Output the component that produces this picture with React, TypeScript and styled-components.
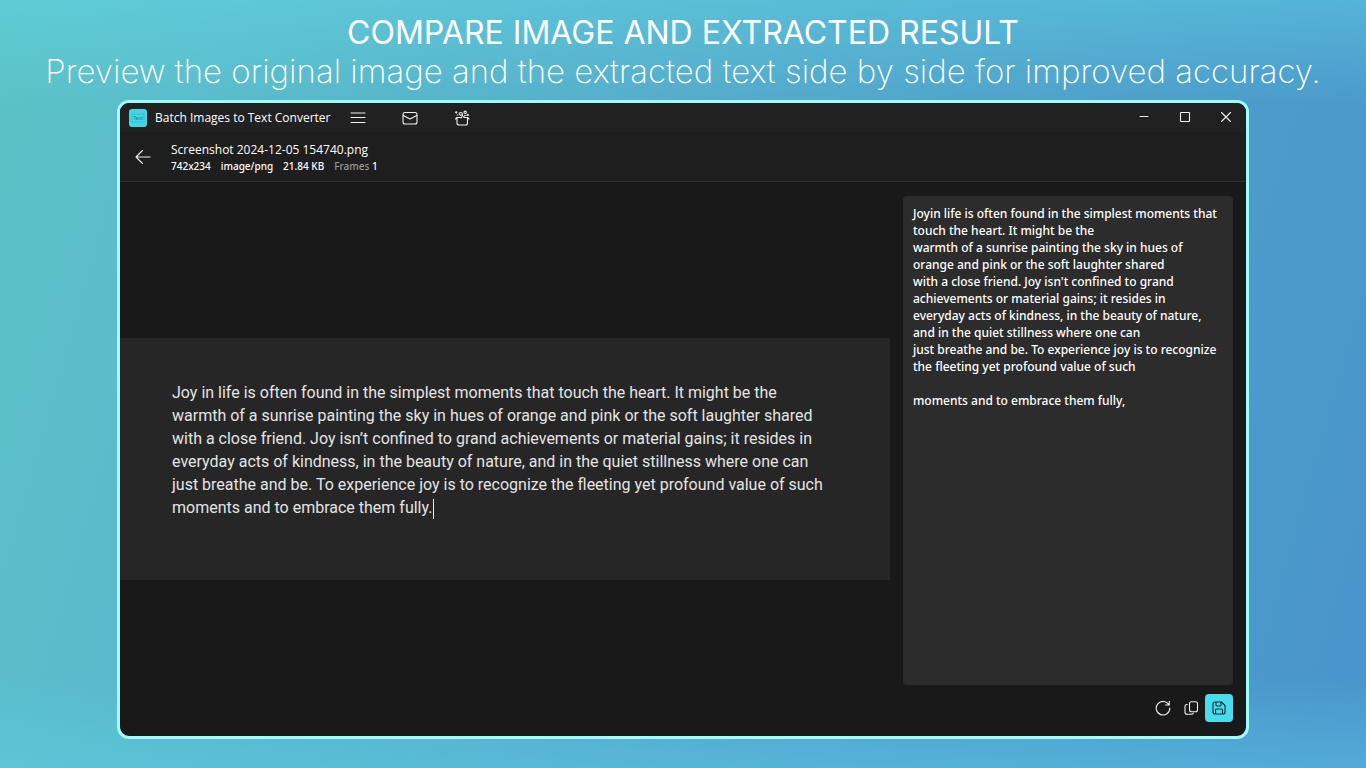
import React from "react";
import styled, { createGlobalStyle } from "styled-components";

const ui = `"Noto Sans", "Open Sans", sans-serif`;

const Global = createGlobalStyle`
  * { box-sizing: border-box; }
  body { margin: 0; font-family: ${ui}; }
`;

const Page = styled.main`
  min-height: 100vh;
  display: flex;
  flex-direction: column;
  padding-bottom: 29px;
  background:
    linear-gradient(180deg, #62dcea66 0%, #62dcea00 14%, #5fe0f000 88%, #5fd8f055 100%),
    linear-gradient(106deg, #5bc2c6 0%, #5bbcca 14%, #54a8ca 50%, #4c9cca 80%, #4a94cc 100%);
`;

const Hero = styled.header`
  color: #fff;
  text-align: center;
  padding-top: 13px;
  white-space: nowrap;
  flex: none;
  height: 100px;
`;

const Title = styled.h1`
  margin: 0;
  font: 400 32px/40px Inter, sans-serif;
`;

const Tagline = styled.p`
  margin: 0;
  font: 200 33px/36px Inter, sans-serif;
`;

const Window = styled.section`
  flex: 1;
  display: flex;
  flex-direction: column;
  width: calc(100% - 234px);
  margin: 0 auto;
  border: 3px solid #9ffcfb;
  border-radius: 12px;
  background: #191919;
  color: #fff;
  overflow: hidden;
`;

const TitleBar = styled.div`
  display: flex;
  align-items: center;
  height: 29px;
  padding-left: 9px;
  background: #212121;
`;

const AppName = styled.span`
  margin-right: 2px;
  font: 400 12px/16px "Open Sans", sans-serif;
`;

const IconButton = styled.button<{ $w?: number; $primary?: boolean }>`
  display: flex;
  align-items: center;
  justify-content: center;
  width: ${(p) => p.$w ?? 28}px;
  height: 28px;
  padding: 0;
  border: 0;
  border-radius: 4px;
  color: ${(p) => (p.$primary ? "#0c3238" : "#f0f0f0")};
  background: ${(p) => (p.$primary ? "#48dcec" : "transparent")};
`;

const FileBar = styled.div`
  display: flex;
  align-items: center;
  gap: 14px;
  height: 50px;
  padding-left: 9px;
  background: #1e1e1e;
  border-bottom: 1px solid #303030;
`;

const FileInfo = styled.div`
  padding-top: 3px;
`;

const FileName = styled.h2`
  margin: 0;
  font: 400 12px/16px "Open Sans", sans-serif;
`;

const Meta = styled.div`
  display: flex;
  gap: 10px;
  font-size: 10px;
  line-height: 16px;
  font-weight: 500;
`;

const Muted = styled.span`
  color: #999;
`;

const Body = styled.div`
  flex: 1;
  display: grid;
  grid-template-columns: minmax(0, 7fr) minmax(0, 3fr);
  column-gap: 13px;
  padding-right: 13px;
`;

const Preview = styled.div`
  display: flex;
  flex-direction: column;
  justify-content: center;
`;

const Picture = styled.article`
  padding: 43px 52px 61px;
  background: #262626;
  color: #e4e4e4;
  font: 400 16px/23px Roboto, sans-serif;
  white-space: pre;
`;

const Caret = styled.i`
  display: inline-block;
  width: 1px;
  height: 20px;
  margin-left: 1px;
  vertical-align: middle;
  background: #eee;
`;

const Result = styled.div`
  display: flex;
  flex-direction: column;
  padding: 14px 0;
`;

const ResultText = styled.textarea`
  flex: 1;
  width: 100%;
  padding: 9px 10px;
  border: 0;
  border-radius: 4px;
  resize: none;
  outline: 0;
  background: #2c2c2c;
  color: #fff;
  font: 500 12px/17px ${ui};
  white-space: pre;
  overflow: hidden;
`;

const Actions = styled.div`
  display: flex;
  justify-content: flex-end;
  padding-top: 9px;
`;

const Icon = ({ children }: { children: React.ReactNode }) => (
  <svg width="16" height="16" viewBox="0 0 16 16" fill="none" stroke="currentColor" strokeWidth="1.1" strokeLinecap="round" strokeLinejoin="round" aria-hidden="true">
    {children}
  </svg>
);

const Logo = styled.svg`
  margin-right: 8px;
`;

const NavGroup = styled.nav`
  display: flex;
  flex: 1;
`;

const WindowControls = styled.div`
  display: flex;
  align-self: flex-start;
`;

const pictureText = `Joy in life is often found in the simplest moments that touch the heart. It might be the
warmth of a sunrise painting the sky in hues of orange and pink or the soft laughter shared
with a close friend. Joy isn’t confined to grand achievements or material gains; it resides in
everyday acts of kindness, in the beauty of nature, and in the quiet stillness where one can
just breathe and be. To experience joy is to recognize the fleeting yet profound value of such
moments and to embrace them fully.`;

const extracted = `Joyin life is often found in the simplest moments that
touch the heart. It might be the
warmth of a sunrise painting the sky in hues of
orange and pink or the soft laughter shared
with a close friend. Joy isn't confined to grand
achievements or material gains; it resides in
everyday acts of kindness, in the beauty of nature,
and in the quiet stillness where one can
just breathe and be. To experience joy is to recognize
the fleeting yet profound value of such

moments and to embrace them fully,`;

export default function App() {
  return (
    <Page>
      <Global />
      <Hero>
        <Title>COMPARE IMAGE AND EXTRACTED RESULT</Title>
        <Tagline>Preview the original image and the extracted text side by side for improved accuracy.</Tagline>
      </Hero>
      <Window>
        <TitleBar>
          <Logo width="18" height="18" viewBox="0 0 18 18" aria-hidden="true">
            <rect width="18" height="18" rx="3" fill="#42d5e6" />
            <rect x="3" y="5" width="12" height="8" fill="none" stroke="#2bb5c8" strokeWidth=".6" />
            <text x="9" y="11" textAnchor="middle" fontSize="5" fill="#137f90">Text</text>
          </Logo>
          <AppName>Batch Images to Text Converter</AppName>
          <NavGroup>
            <IconButton $w={52} aria-label="Menu"><Icon><path d="M1 3h14M1 7.500h14M1 12.500h14" /></Icon></IconButton>
            <IconButton $w={52} aria-label="Mail"><Icon><rect x="1" y="2.500" width="14" height="11.500" rx="2" /><path d="M1.300 5.500 8 9l6.700-3.500" /></Icon></IconButton>
            <IconButton $w={52} aria-label="More apps">
              <Icon>
                <path d="M3 7.500v5.500a2 2 0 0 0 2 2h6.500a2 2 0 0 0 2-2V7.500M3 7.500h3.500M10 7.500h3.500M3 7.500 1.500 9M13.500 7.500 15 9" />
                <path d="M7.800 4.800c-1.500.7-2.700 0-2.600-1.200.1-1.500 2.900-1.700 3.300.2.300 1.500-.3 3-1.300 4.200M9.500 7c.5-1.300 1.500-1.800 2.500-1.800" />
                <circle cx="11.200" cy="2.300" r="1.200" />
                <path d="M2.200 1.500v1.600M1.400 2.300H3M3.200 5h.6M13.800 4.200v1.400M13.100 4.900h1.400" />
              </Icon>
            </IconButton>
          </NavGroup>
          <WindowControls>
            <IconButton $w={41} aria-label="Minimize"><Icon><path d="M4 7.500h8" /></Icon></IconButton>
            <IconButton $w={41} aria-label="Maximize"><Icon><rect x="3.500" y="3.500" width="9" height="9" rx=".5" /></Icon></IconButton>
            <IconButton $w={41} aria-label="Close"><Icon><path d="m3.500 3.500 9 9m0-9-9 9" /></Icon></IconButton>
          </WindowControls>
        </TitleBar>
        <FileBar>
          <IconButton aria-label="Back"><Icon><path d="M15 8H1M7.500 1.500 1 8l6.500 6.500" /></Icon></IconButton>
          <FileInfo>
            <FileName>Screenshot 2024-12-05 154740.png</FileName>
            <Meta><span>742x234</span><span>image/png</span><span>21.84 KB</span><span><Muted>Frames</Muted> 1</span></Meta>
          </FileInfo>
        </FileBar>
        <Body>
          <Preview><Picture>{pictureText}<Caret /></Picture></Preview>
          <Result>
            <ResultText aria-label="Extracted text" defaultValue={extracted} spellCheck={false} />
            <Actions>
              <IconButton aria-label="Refresh"><Icon><path d="M14 5A6.800 6.800 0 1 0 14.800 8M14.300 1.300V5h-3.700" /></Icon></IconButton>
              <IconButton aria-label="Copy"><Icon><rect x="6.500" y="1.800" width="8" height="10" rx="2" /><path d="M4.300 4.500H4a2 2 0 0 0-2 2v5.700a2 2 0 0 0 2 2h4.500a2 2 0 0 0 1.800-1" /></Icon></IconButton>
              <IconButton $primary aria-label="Save"><Icon><path d="M4 2h6.500L14 5.500V12a2 2 0 0 1-2 2H4a2 2 0 0 1-2-2V4a2 2 0 0 1 2-2ZM5 2v3a1 1 0 0 0 1 1h3a1 1 0 0 0 1-1V2M4.500 14v-4a1 1 0 0 1 1-1h5a1 1 0 0 1 1 1v4" /></Icon></IconButton>
            </Actions>
          </Result>
        </Body>
      </Window>
    </Page>
  );
}
